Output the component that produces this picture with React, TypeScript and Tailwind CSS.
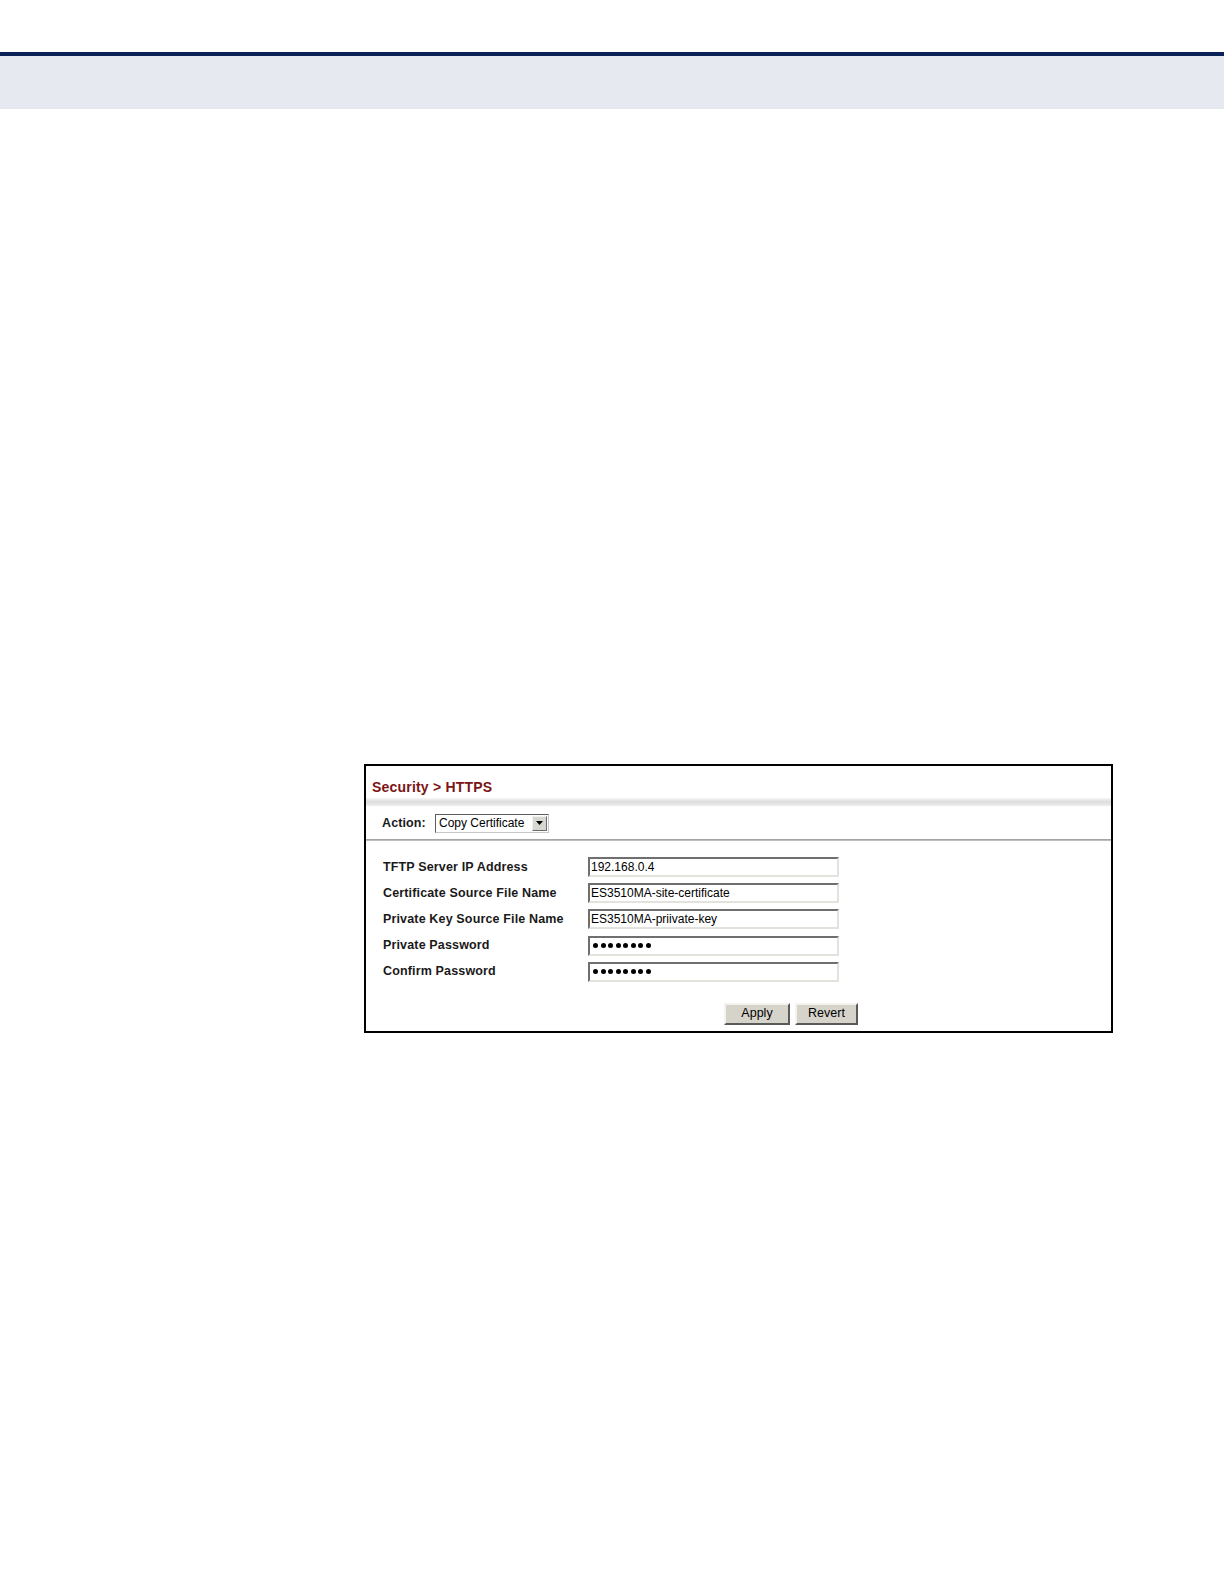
import React from 'react';

const rows = [
  { label: 'TFTP Server IP Address', value: '192.168.0.4', secret: false },
  { label: 'Certificate Source File Name', value: 'ES3510MA-site-certificate', secret: false },
  { label: 'Private Key Source File Name', value: 'ES3510MA-priivate-key', secret: false },
  { label: 'Private Password', value: '••••••••', secret: true },
  { label: 'Confirm Password', value: '••••••••', secret: true },
];

function Dots({ count }: { count: number }) {
  return (
    <span className="flex gap-[2.5px] pl-[2px]">
      {Array.from({ length: count }).map((_, i) => (
        <span key={i} className="h-[5px] w-[5px] rounded-full bg-black" />
      ))}
    </span>
  );
}

function Field({ value, secret }: { value: string; secret: boolean }) {
  return (
    <div className="flex h-[20px] w-[251px] items-center border-2 border-t-[#6f6f6f] border-l-[#6f6f6f] border-b-[#e4e2dc] border-r-[#e4e2dc] bg-white pl-[1px]">
      {secret ? (
        <Dots count={8} />
      ) : (
        <span className="text-[12px] leading-none text-black">{value}</span>
      )}
    </div>
  );
}

function Button({ children, width }: { children: React.ReactNode; width: string }) {
  return (
    <button
      className={`flex h-[22px] items-center justify-center border-2 border-t-[#f4f3ee] border-l-[#f4f3ee] border-b-[#5a5a5a] border-r-[#5a5a5a] bg-[#d6d3cb] text-[12.5px] text-black ${width}`}
    >
      {children}
    </button>
  );
}

export default function App() {
  return (
    <div className="min-h-[1584px] w-[1224px] bg-white font-['Liberation_Sans',Arial,sans-serif]">
      <div className="h-[52px]" />
      <div className="h-[4px] bg-[#0b2256]" />
      <div className="h-[53px] bg-[#e6e9f0]" />

      <div className="pt-[655px] pl-[364px]">
        <section className="h-[269px] w-[749px] border-2 border-black bg-white">
          <div className="pt-[13px] pl-[6px] text-[14px] leading-[16px] font-bold tracking-[0.2px] text-[#7b1416]">
            Security &gt; HTTPS
          </div>
          <div className="mt-[3px] h-[8px] bg-gradient-to-b from-[#f6f6f6] via-[#dcdcdc] to-[#efefef]" />

          <div className="flex h-[33px] items-center pt-[1px] pl-[16px]">
            <span className="w-[53px] text-[12.5px] font-bold tracking-[0.1px] text-[#1a1a1a]">Action:</span>
            <div className="flex h-[19px] w-[114px] items-center justify-between border border-t-[#5c5c5c] border-l-[#5c5c5c] border-b-[#c8c8c8] border-r-[#c8c8c8] bg-white pl-[3px] pr-[1px]">
              <span className="text-[12px] leading-none text-black">Copy Certificate</span>
              <span className="flex h-[15px] w-[15px] items-center justify-center border border-t-[#f0f0f0] border-l-[#f0f0f0] border-b-[#6a6a6a] border-r-[#6a6a6a] bg-[#d8d6d0]">
                <svg width="7" height="4" viewBox="0 0 7 4">
                  <path d="M0 0 H7 L3.5 4 Z" fill="#000" />
                </svg>
              </span>
            </div>
          </div>
          <div className="h-[2px] bg-gradient-to-b from-[#9a9a9a] to-[#c8c8c8]" />

          <div className="flex flex-col gap-[6.2px] pt-[16px] pl-[17px]">
            {rows.map((r) => (
              <div key={r.label} className="flex items-center">
                <span className="w-[205px] text-[12.5px] font-bold tracking-[0.15px] text-[#1a1a1a]">{r.label}</span>
                <Field value={r.value} secret={r.secret} />
              </div>
            ))}
          </div>

          <div className="flex gap-[5px] pt-[21px] pl-[358px]">
            <Button width="w-[66px]">Apply</Button>
            <Button width="w-[63px]">Revert</Button>
          </div>
        </section>
      </div>
    </div>
  );
}
